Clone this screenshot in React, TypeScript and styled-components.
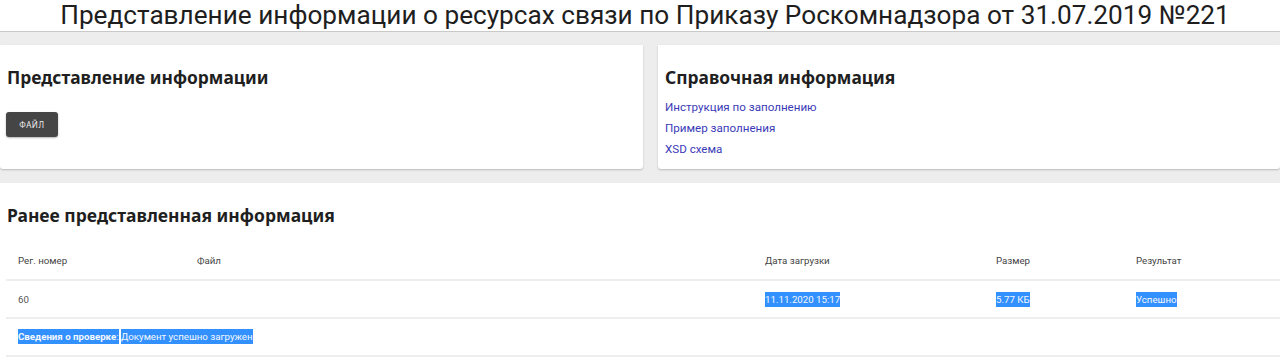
import React, { FC } from 'react';
import styled, { createGlobalStyle } from 'styled-components';

const GlobalStyle = createGlobalStyle`
	html, body {
		margin: 0;
		padding: 0;
		background: #ededed;
		font-family: Roboto, 'Liberation Sans', sans-serif;
		color: #222;
	}
`;

type Row = { reg: string; file: string; date: string; size: string; result: string };

const rows: Row[] = [{ reg: '60', file: '', date: '11.11.2020 15:17', size: '5.77 КБ', result: 'Успешно' }];

const links = ['Инструкция по заполнению', 'Пример заполнения', 'XSD схема'];

const App: FC = () => {
	return (
		<Page>
			<GlobalStyle />
			<Header>
				<Title>Представление информации о ресурсах связи по Приказу Роскомнадзора от 31.07.2019 №221</Title>
			</Header>
			<Cards>
				<Card>
					<CardTitle>Представление информации</CardTitle>
					<FileButton>Файл</FileButton>
				</Card>
				<Card>
					<CardTitle>Справочная информация</CardTitle>
					<LinkList>
						{links.map((l) => (
							<DocLink key={l} href="#">
								{l}
							</DocLink>
						))}
					</LinkList>
				</Card>
			</Cards>
			<History>
				<HistoryTitle>Ранее представленная информация</HistoryTitle>
				<TableRow head>
					<Cell>Рег. номер</Cell>
					<Cell>Файл</Cell>
					<Cell>Дата загрузки</Cell>
					<Cell>Размер</Cell>
					<Cell>Результат</Cell>
				</TableRow>
				{rows.map((r) => (
					<React.Fragment key={r.reg}>
						<TableRow>
							<Cell>{r.reg}</Cell>
							<Cell>{r.file}</Cell>
							<Cell>
								<Marked>{r.date}</Marked>
							</Cell>
							<Cell>
								<Marked>{r.size}</Marked>
							</Cell>
							<Cell>
								<Marked>{r.result}</Marked>
							</Cell>
						</TableRow>
						<DetailRow>
							<Marked>
								<b>Сведения о проверке</b>:
							</Marked>{' '}
							<Marked>Документ успешно загружен</Marked>
						</DetailRow>
					</React.Fragment>
				))}
			</History>
		</Page>
	);
};

export default App;

const Page = styled.div`
	min-height: 357px;
	display: flex;
	flex-direction: column;
`;

const Header = styled.header`
	height: 31px;
	background: #fff;
	border-bottom: 1px solid #c9c9c9;
	display: flex;
	justify-content: center;
	overflow: hidden;
`;

const Title = styled.h1`
	margin: 0 0 0 10px;
	font-size: 26.2px;
	font-weight: 400;
	line-height: 31px;
	color: #1e1e1e;
	white-space: nowrap;
`;

const Cards = styled.div`
	display: grid;
	grid-template-columns: 643px 1fr;
	gap: 15px;
	margin-top: 13px;
`;

const Card = styled.section`
	background: #fff;
	height: 124px;
	border-radius: 0 0 3px 3px;
	box-shadow: 0 1px 2px rgba(0, 0, 0, 0.22);
	padding: 20px 8px 0 7px;
	box-sizing: border-box;
`;

const CardTitle = styled.h2`
	margin: 0;
	font-family: 'Noto Sans', 'Open Sans', sans-serif;
	font-size: 17.4px;
	font-weight: 700;
	line-height: 24px;
	color: #1f1f1f;
`;

const FileButton = styled.button`
	display: block;
	margin-top: 23px;
	margin-left: -1px;
	width: 52px;
	height: 25px;
	background: #454545;
	color: #eee;
	border: none;
	border-radius: 3px;
	box-shadow: 0 1px 2px rgba(0, 0, 0, 0.3);
	font-family: 'Noto Sans', sans-serif;
	font-size: 8px;
	letter-spacing: 0.6px;
	text-transform: uppercase;
	padding: 0;
`;

const LinkList = styled.div`
	display: flex;
	flex-direction: column;
	margin-top: 8px;
`;

const DocLink = styled.a`
	font-size: 11.6px;
	line-height: 21px;
	color: #3a3ab8;
	text-decoration: none;
`;

const History = styled.section`
	flex: 1;
	background: #fff;
	margin-top: 14px;
	padding: 20px 0 0 6px;
`;

const HistoryTitle = styled.h2`
	margin: 0 0 14px 1px;
	font-family: 'Noto Sans', 'Open Sans', sans-serif;
	font-size: 17.5px;
	font-weight: 700;
	line-height: 24px;
	color: #1f1f1f;
`;

const TableRow = styled.div<{ head?: boolean }>`
	display: grid;
	grid-template-columns: 179px 568px 231px 140px 1fr;
	height: ${(p) => (p.head ? '38px' : '36px')};
	align-items: center;
	border-bottom: 2px solid #eeeeee;
	font-size: 9.7px;
	color: ${(p) => (p.head ? '#444' : '#555')};
`;

const Cell = styled.div`
	padding-left: 12px;
	white-space: nowrap;
`;

const DetailRow = styled.div`
	height: 36px;
	line-height: 36px;
	padding-left: 12px;
	border-bottom: 2px solid #eeeeee;
	font-size: 9.7px;
	white-space: nowrap;
`;

const Marked = styled.span`
	background: #3390ff;
	color: #f4f8ff;
	padding: 2px 0;
	b {
		font-weight: 700;
	}
`;
